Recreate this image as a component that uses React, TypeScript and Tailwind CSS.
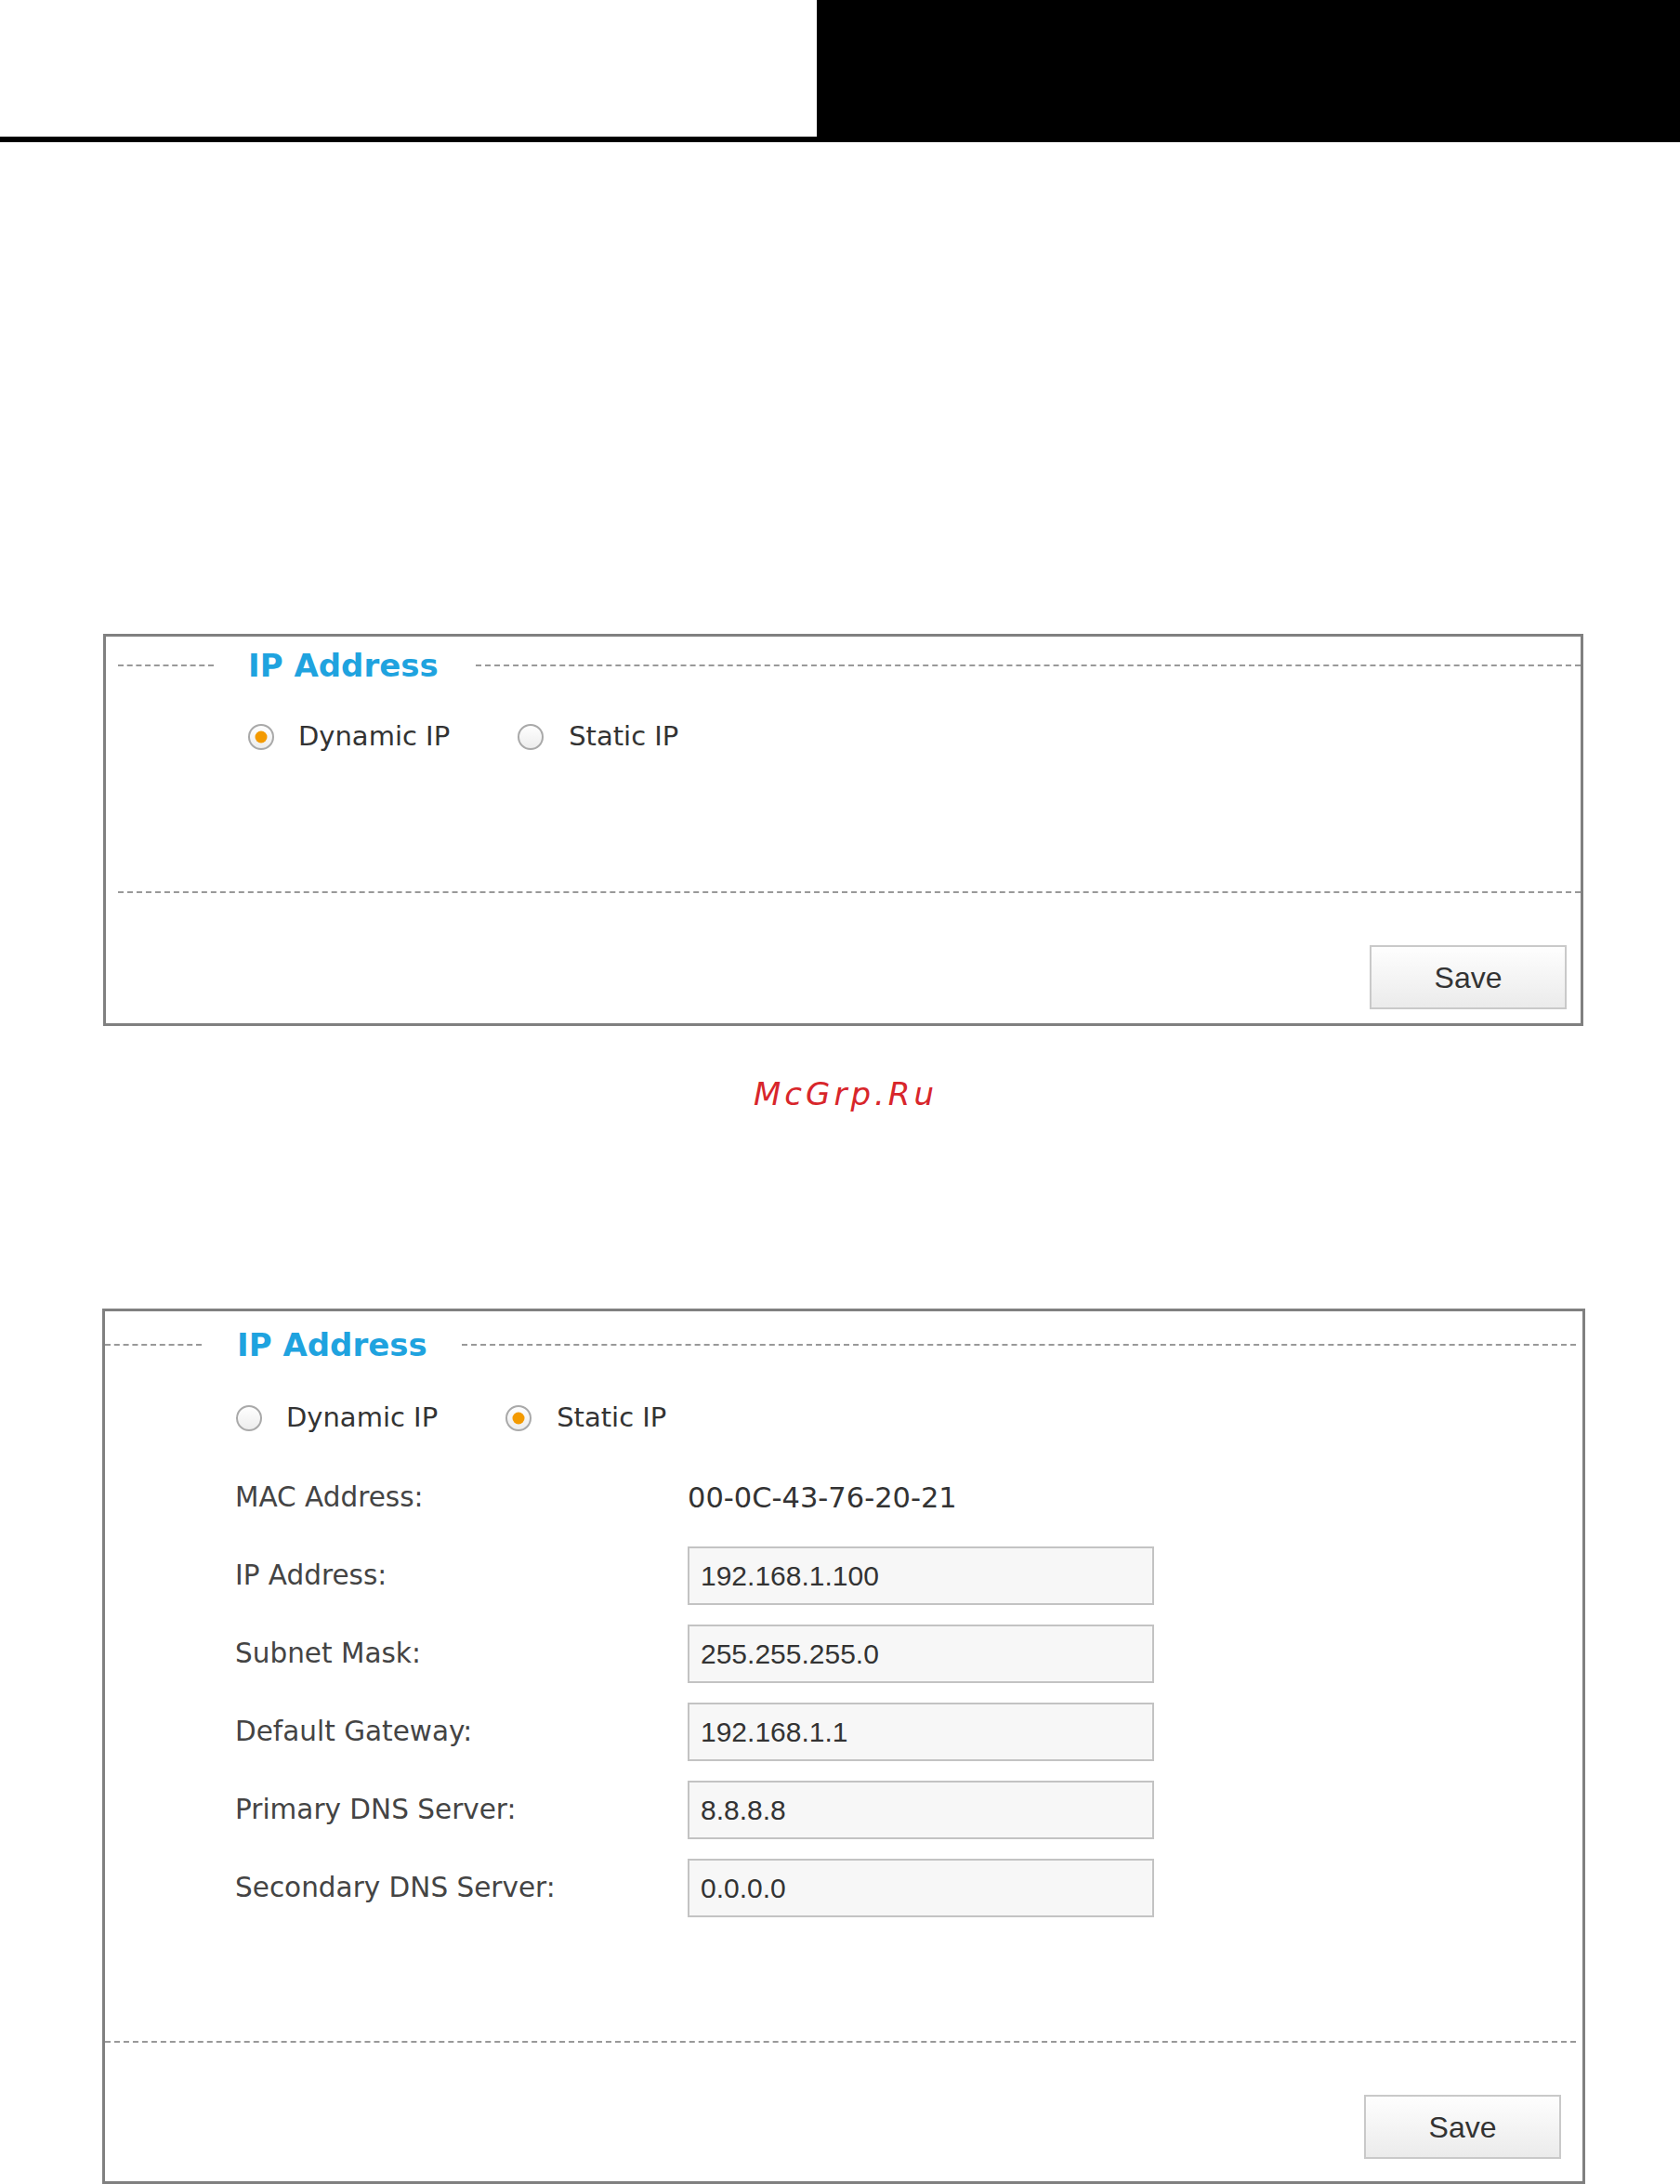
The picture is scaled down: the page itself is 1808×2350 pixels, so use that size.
import React from "react";

const labelFont = { fontFamily: '"DejaVu Sans", Verdana, sans-serif' };

function Radio({ checked }: { checked: boolean }) {
  return (
    <svg width="30" height="30" viewBox="0 0 30 30" className="shrink-0">
      <defs>
        <linearGradient id="rg" x1="0" y1="0" x2="0" y2="1">
          <stop offset="0" stopColor="#ffffff" />
          <stop offset="1" stopColor="#ececec" />
        </linearGradient>
      </defs>
      <circle cx="15" cy="15" r="13" fill="url(#rg)" stroke="#a9a9a9" strokeWidth="2" />
      {checked && <circle cx="15" cy="15" r="6.5" fill="#f39a00" />}
    </svg>
  );
}

function Dash({ className }: { className: string }) {
  return <div className={`border-t-2 border-dashed border-[#999] ${className}`} />;
}

function TitleRow({ pad }: { pad: "a" | "b" }) {
  if (pad === "a") {
    return (
      <div className="flex items-center h-[40px] mt-[11px]">
        <Dash className="ml-[13px] w-[103px]" />
        <span
          className="ml-[37px] text-[34px] font-bold leading-[40px] text-[#1fa3df]"
          style={labelFont}
        >
          IP Address
        </span>
        <Dash className="ml-[40px] flex-1" />
      </div>
    );
  }
  return (
    <div className="flex items-center h-[40px] mt-[16px]">
      <Dash className="w-[104px]" />
      <span
        className="ml-[38px] text-[34px] font-bold leading-[40px] text-[#1fa3df]"
        style={labelFont}
      >
        IP Address
      </span>
      <Dash className="ml-[37px] mr-[7px] flex-1" />
    </div>
  );
}

function RadioRow({ staticIp, first }: { staticIp: boolean; first: boolean }) {
  return (
    <div
      className={`flex items-center h-[40px] text-[29px] text-[#333] ${
        first ? "mt-[37px] ml-[152px]" : "mt-[39px] ml-[140px]"
      }`}
      style={labelFont}
    >
      <Radio checked={!staticIp} />
      <span className="ml-[25px]">Dynamic IP</span>
      <span className="ml-[72px] flex items-center">
        <Radio checked={staticIp} />
        <span className="ml-[26px]">Static IP</span>
      </span>
    </div>
  );
}

function SaveButton({ className }: { className: string }) {
  return (
    <button
      className={`w-[212px] h-[69px] border-2 border-[#c9c9c9] bg-gradient-to-b from-[#fefefe] to-[#ebebeb] text-[32px] text-[#333] ${className}`}
      style={{ fontFamily: '"Liberation Sans", Arial, sans-serif' }}
    >
      Save
    </button>
  );
}

const fields = [
  ["IP Address:", "192.168.1.100"],
  ["Subnet Mask:", "255.255.255.0"],
  ["Default Gateway:", "192.168.1.1"],
  ["Primary DNS Server:", "8.8.8.8"],
  ["Secondary DNS Server:", "0.0.0.0"],
];

export default function App() {
  return (
    <div className="w-[1808px] h-[2350px] bg-white overflow-hidden">
      {/* header strip */}
      <div className="flex h-[153px]">
        <div className="w-[879px] border-b-[6px] border-black bg-white" />
        <div className="flex-1 bg-black" />
      </div>

      {/* Dynamic IP panel */}
      <div className="mt-[529px] ml-[111px] w-[1593px] h-[422px] border-[3px] border-[#808080] flex flex-col">
        <TitleRow pad="a" />
        <RadioRow staticIp={false} first />
        <Dash className="mt-[146px] ml-[13px]" />
        <div className="flex justify-end mt-[56px] mr-[15px]">
          <SaveButton className="" />
        </div>
      </div>

      <div
        className="mt-[53px] text-center text-[34px] leading-[40px] italic tracking-[4px] text-[#d8262b] pl-[12px]"
        style={{ fontFamily: '"DejaVu Sans", sans-serif' }}
      >
        McGrp.Ru
      </div>

      {/* Static IP panel */}
      <div className="mt-[211px] ml-[110px] w-[1596px] h-[942px] border-[3px] border-[#808080] flex flex-col">
        <TitleRow pad="b" />
        <RadioRow staticIp first={false} />

        <div className="mt-[34px] ml-[140px] flex flex-col gap-[21px] text-[29.5px] text-[#444]" style={labelFont}>
          <div className="flex items-center h-[63px]">
            <span className="w-[487px]">MAC Address:</span>
            <span className="text-[#333] text-[30.5px]">00-0C-43-76-20-21</span>
          </div>
          {fields.map(([label, value]) => (
            <div key={label} className="flex items-center h-[63px]">
              <span className="w-[487px]">{label}</span>
              <div
                className="w-[502px] h-[63px] border-2 border-[#c3c3c3] bg-[#f7f7f7] flex items-center pl-[12px] text-[30px] text-[#333]"
                style={{ fontFamily: '"Liberation Sans", Arial, sans-serif' }}
              >
                {value}
              </div>
            </div>
          ))}
        </div>

        <Dash className="mt-[133px] mr-[7px]" />
        <div className="flex justify-end mt-[56px] mr-[23px]">
          <SaveButton className="h-[68px]" />
        </div>
      </div>
    </div>
  );
}
